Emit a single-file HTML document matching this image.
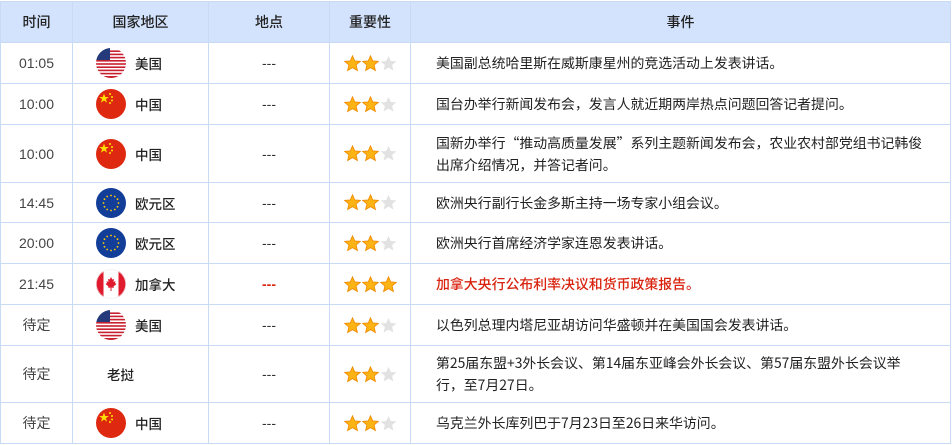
<!DOCTYPE html>
<html><head><meta charset="utf-8"><style>
*{margin:0;padding:0;box-sizing:border-box}
body{width:952px;height:445px;background:#fff;font-family:"Liberation Sans","Noto Sans CJK SC",sans-serif;color:#333;overflow:hidden}
table{position:absolute;left:0;top:1px;border-collapse:collapse;table-layout:fixed;width:951px}
td,th{border:1px solid #c9daf5;font-size:14px;text-align:center;vertical-align:middle;font-weight:normal}
th{background:#d3e3fd;height:41px;font-size:14px;color:#222;font-family:"Noto Sans CJK SC",sans-serif;font-weight:500}
td.t{font-size:14px;color:#444}
td.c{text-align:left;padding-left:23px}
td.c svg{vertical-align:middle;margin-right:9px}
td.c span{vertical-align:middle;color:#222;font-family:"Noto Sans CJK SC",sans-serif;font-weight:500;font-size:13.5px}
td.e{text-align:left;padding-left:25px;line-height:22px;color:#222;font-family:"Noto Sans CJK SC","Liberation Sans",sans-serif;font-size:13.9px}
td.red{color:#d9230f}
td.e.red{color:#d9230f;font-weight:500}
.st svg{margin:0 0.5px;vertical-align:middle}
</style></head><body>
<svg width="0" height="0" style="position:absolute">
<defs>
<symbol id="so" viewBox="0 0 16 16"><polygon points="8,0.8 10.1,5.6 15.4,6 11.4,9.4 12.6,14.6 8,11.9 3.4,14.6 4.6,9.4 0.6,6 5.9,5.6" fill="#fcb314" stroke="#f08a00" stroke-width="0.8"/></symbol>
<symbol id="sg" viewBox="0 0 16 16"><polygon points="8,0.8 10.1,5.6 15.4,6 11.4,9.4 12.6,14.6 8,11.9 3.4,14.6 4.6,9.4 0.6,6 5.9,5.6" fill="#e2e2e2"/></symbol>
<symbol id="us" viewBox="0 0 30 30"><clipPath id="cu"><circle cx="15" cy="15" r="15"/></clipPath><g clip-path="url(#cu)"><rect width="30" height="30" fill="#fff"/><g fill="#c8202f"><rect y="12" width="30" height="1.6"/><rect y="15.2" width="30" height="1.6"/><rect y="18.4" width="30" height="1.6"/><rect y="21.6" width="30" height="1.6"/><rect y="24.8" width="30" height="1.6"/><rect y="28" width="30" height="2"/><rect x="14" y="2.4" width="16" height="1.6"/><rect x="14" y="5.6" width="16" height="1.6"/><rect x="14" y="8.8" width="16" height="1.6"/></g><rect width="14" height="12" fill="#243a7a"/></g></symbol>
<symbol id="cn" viewBox="0 0 30 30"><circle cx="15" cy="15" r="15" fill="#de2910"/><polygon points="8,4.5 9.2,8 12.8,8 9.9,10.1 11,13.6 8,11.5 5,13.6 6.1,10.1 3.2,8 6.8,8" fill="#ffde00"/><circle cx="14" cy="5" r="1" fill="#ffde00"/><circle cx="16" cy="8" r="1" fill="#ffde00"/><circle cx="16" cy="11.5" r="1" fill="#ffde00"/><circle cx="14" cy="14" r="1" fill="#ffde00"/></symbol>
<symbol id="eu" viewBox="0 0 30 30"><circle cx="15" cy="15" r="15" fill="#123d99"/><g fill="#ffcc00"><circle cx="15" cy="7.5" r=".9"/><circle cx="18.8" cy="8.5" r=".9"/><circle cx="21.5" cy="11.2" r=".9"/><circle cx="22.5" cy="15" r=".9"/><circle cx="21.5" cy="18.8" r=".9"/><circle cx="18.8" cy="21.5" r=".9"/><circle cx="15" cy="22.5" r=".9"/><circle cx="11.2" cy="21.5" r=".9"/><circle cx="8.5" cy="18.8" r=".9"/><circle cx="7.5" cy="15" r=".9"/><circle cx="8.5" cy="11.2" r=".9"/><circle cx="11.2" cy="8.5" r=".9"/></g></symbol>
<symbol id="ca" viewBox="0 0 30 30"><clipPath id="cc"><circle cx="15" cy="15" r="15"/></clipPath><g clip-path="url(#cc)"><rect width="30" height="30" fill="#fff"/><rect width="7.5" height="30" fill="#e01b2e"/><rect x="22.5" width="7.5" height="30" fill="#e01b2e"/><polygon points="15,8 16.3,10.5 18,10 17.5,13 19.5,12 19,14 20.5,15 17.5,17.5 17.8,19 15.5,18.5 15.5,22 14.5,22 14.5,18.5 12.2,19 12.5,17.5 9.5,15 11,14 10.5,12 12.5,13 12,10 13.7,10.5" fill="#e01b2e"/></g><circle cx="15" cy="15" r="14.6" fill="none" stroke="#eee" stroke-width=".6"/></symbol>
</defs></svg>
<table>
<colgroup><col style="width:72px"><col style="width:136px"><col style="width:121px"><col style="width:81px"><col></colgroup>
<tr><th>时间</th><th>国家地区</th><th>地点</th><th>重要性</th><th>事件</th></tr>
<tr style="height:41px"><td class="t">01:05</td><td class="c"><svg width="30" height="30"><use href="#us"/></svg><span>美国</span></td><td>---</td><td class="st"><svg width="17" height="17"><use href="#so"/></svg><svg width="17" height="17"><use href="#so"/></svg><svg width="17" height="17"><use href="#sg"/></svg></td><td class="e">美国副总统哈里斯在威斯康星州的竞选活动上发表讲话。</td></tr>
<tr style="height:41px"><td class="t">10:00</td><td class="c"><svg width="30" height="30"><use href="#cn"/></svg><span>中国</span></td><td>---</td><td class="st"><svg width="17" height="17"><use href="#so"/></svg><svg width="17" height="17"><use href="#so"/></svg><svg width="17" height="17"><use href="#sg"/></svg></td><td class="e">国台办举行新闻发布会，发言人就近期两岸热点问题回答记者提问。</td></tr>
<tr style="height:58px"><td class="t">10:00</td><td class="c"><svg width="30" height="30"><use href="#cn"/></svg><span>中国</span></td><td>---</td><td class="st"><svg width="17" height="17"><use href="#so"/></svg><svg width="17" height="17"><use href="#so"/></svg><svg width="17" height="17"><use href="#sg"/></svg></td><td class="e">国新办举行“推动高质量发展”系列主题新闻发布会，农业农村部党组书记韩俊<br>出席介绍情况，并答记者问。</td></tr>
<tr style="height:40px"><td class="t">14:45</td><td class="c"><svg width="30" height="30"><use href="#eu"/></svg><span>欧元区</span></td><td>---</td><td class="st"><svg width="17" height="17"><use href="#so"/></svg><svg width="17" height="17"><use href="#so"/></svg><svg width="17" height="17"><use href="#sg"/></svg></td><td class="e">欧洲央行副行长金多斯主持一场专家小组会议。</td></tr>
<tr style="height:41px"><td class="t">20:00</td><td class="c"><svg width="30" height="30"><use href="#eu"/></svg><span>欧元区</span></td><td>---</td><td class="st"><svg width="17" height="17"><use href="#so"/></svg><svg width="17" height="17"><use href="#so"/></svg><svg width="17" height="17"><use href="#sg"/></svg></td><td class="e">欧洲央行首席经济学家连恩发表讲话。</td></tr>
<tr style="height:41px"><td class="t">21:45</td><td class="c"><svg width="30" height="30"><use href="#ca"/></svg><span>加拿大</span></td><td class="red"><b>---</b></td><td class="st"><svg width="17" height="17"><use href="#so"/></svg><svg width="17" height="17"><use href="#so"/></svg><svg width="17" height="17"><use href="#so"/></svg></td><td class="e red">加拿大央行公布利率决议和货币政策报告。</td></tr>
<tr style="height:41px"><td class="t">待定</td><td class="c"><svg width="30" height="30"><use href="#us"/></svg><span>美国</span></td><td>---</td><td class="st"><svg width="17" height="17"><use href="#so"/></svg><svg width="17" height="17"><use href="#so"/></svg><svg width="17" height="17"><use href="#sg"/></svg></td><td class="e">以色列总理内塔尼亚胡访问华盛顿并在美国国会发表讲话。</td></tr>
<tr style="height:57px"><td class="t">待定</td><td class="c" style="padding-left:34px"><span>老挝</span></td><td>---</td><td class="st"><svg width="17" height="17"><use href="#so"/></svg><svg width="17" height="17"><use href="#so"/></svg><svg width="17" height="17"><use href="#sg"/></svg></td><td class="e">第25届东盟+3外长会议、第14届东亚峰会外长会议、第57届东盟外长会议举<br>行，至7月27日。</td></tr>
<tr style="height:41px"><td class="t">待定</td><td class="c"><svg width="30" height="30"><use href="#cn"/></svg><span>中国</span></td><td>---</td><td class="st"><svg width="17" height="17"><use href="#so"/></svg><svg width="17" height="17"><use href="#so"/></svg><svg width="17" height="17"><use href="#sg"/></svg></td><td class="e">乌克兰外长库列巴于7月23日至26日来华访问。</td></tr>
</table>
</body></html>
